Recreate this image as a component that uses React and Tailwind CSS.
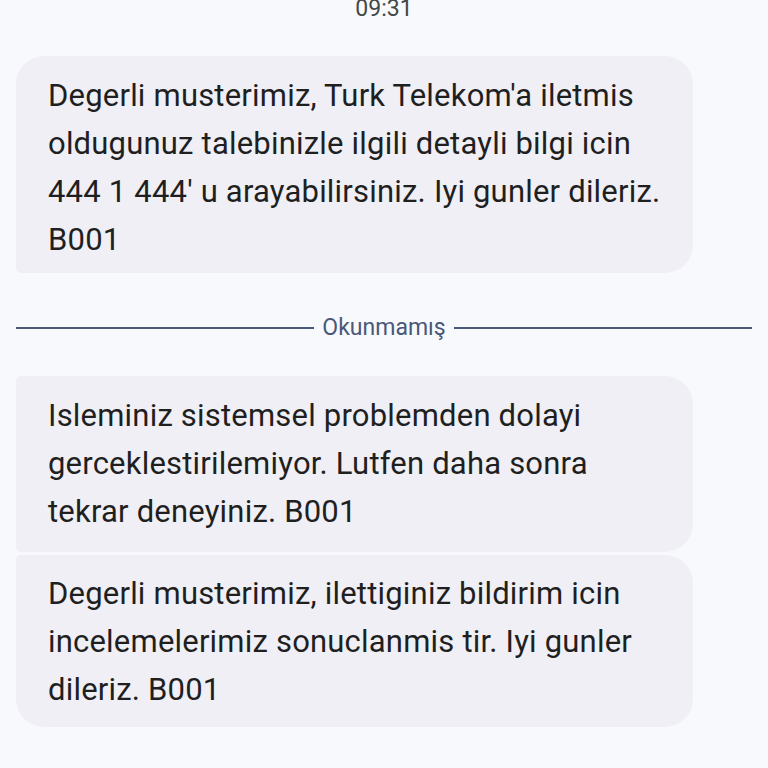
import React from "react";

const font = { fontFamily: "Roboto, 'Noto Sans', sans-serif" };

function Bubble({ lines, corners, pad }) {
  return (
    <div className={`w-[677px] bg-[#efeff5] px-8 ${pad} ${corners}`}>
      {lines.map((l, i) => (
        <div key={i} className="whitespace-nowrap text-[31px] leading-[48px] tracking-[0.2px] text-[#1f1f1f]">
          {l}
        </div>
      ))}
    </div>
  );
}

export default function App() {
  return (
    <div className="w-[768px] h-[768px] overflow-hidden bg-[#f8f9fd]" style={font}>
      <div className="-mt-[3px] h-[24px] text-center text-[23px] leading-[24px] text-[#444746]">09:31</div>
      <div className="px-4 mt-[35px]">
        <Bubble
          pad="pt-[16px] pb-[9px]"
          corners="rounded-tl-[28px] rounded-tr-[28px] rounded-br-[28px] rounded-bl-[5px]"
          lines={[
            "Degerli musterimiz, Turk Telekom'a iletmis",
            "oldugunuz talebinizle ilgili detayli bilgi icin",
            "444 1 444' u arayabilirsiniz. Iyi gunler dileriz.",
            "B001",
          ]}
        />
        <div className="mt-[43px] mb-9 flex h-6 items-center gap-2">
          <div className="h-[2px] flex-1 bg-[#4a5878]" />
          <span className="text-[23px] leading-6 text-[#4a5878]">Okunmamış</span>
          <div className="h-[2px] flex-1 bg-[#4a5878]" />
        </div>
        <div className="flex flex-col gap-[3px]">
          <Bubble
            pad="py-4"
            corners="rounded-tl-[5px] rounded-tr-[28px] rounded-br-[28px] rounded-bl-[5px]"
            lines={[
              "Isleminiz sistemsel problemden dolayi",
              "gerceklestirilemiyor. Lutfen daha sonra",
              "tekrar deneyiniz. B001",
            ]}
          />
          <Bubble
            pad="pt-[15px] pb-[13px]"
            corners="rounded-tl-[5px] rounded-tr-[28px] rounded-br-[28px] rounded-bl-[28px]"
            lines={[
              "Degerli musterimiz, ilettiginiz bildirim icin",
              "incelemelerimiz sonuclanmis tir. Iyi gunler",
              "dileriz. B001",
            ]}
          />
        </div>
      </div>
    </div>
  );
}
